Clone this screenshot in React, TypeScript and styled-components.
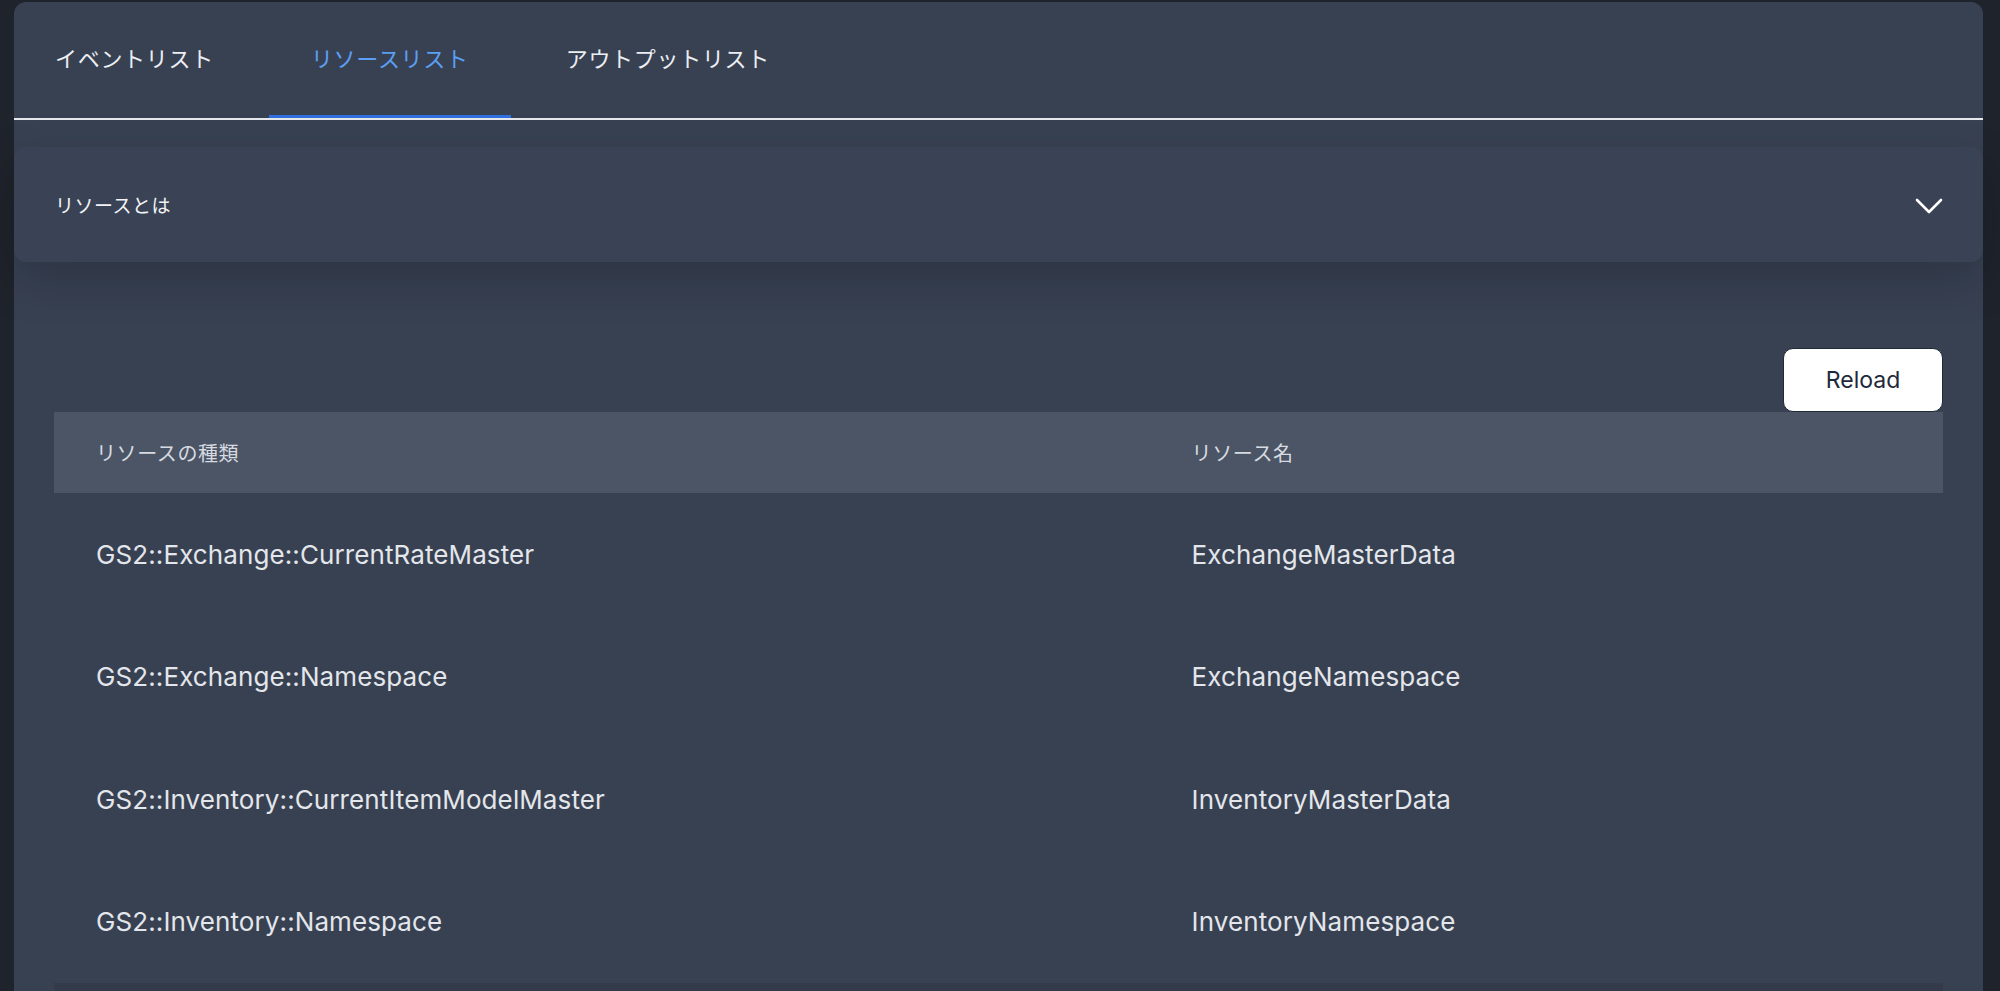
import React, { useState } from "react";
import styled, { createGlobalStyle } from "styled-components";

const GlobalStyle = createGlobalStyle`
  html, body {
    margin: 0;
    padding: 0;
    background: #1f232b;
    height: 991px;
    overflow: hidden;
  }
  body {
    padding: 2px 17px 0 14px;
    box-sizing: border-box;
    font-family: "Noto Sans CJK JP", "Noto Sans", sans-serif;
  }
  * { box-sizing: border-box; }
`;

const Card = styled.div`
  background: #384152;
  border-radius: 12px 12px 0 0;
  min-height: 1200px;
  display: flex;
  flex-direction: column;
`;

const TabBar = styled.div`
  display: flex;
  gap: 13px;
  height: 118px;
  border-bottom: 2px solid #e5e7eb;
`;

const Tab = styled.button<{ $active?: boolean }>`
  appearance: none;
  background: transparent;
  border: none;
  margin: 0;
  padding: 0 42px 7px;
  height: 116px;
  display: flex;
  align-items: center;
  font-family: "Noto Sans CJK JP", sans-serif;
  font-size: 22px;
  letter-spacing: 0.7px;
  color: ${(p) => (p.$active ? "#5b9ef2" : "#eceef2")};
  box-shadow: ${(p) => (p.$active ? "inset 0 -3px 0 #2f6fe0" : "none")};
  cursor: pointer;
  &:first-child { padding-left: 41px; }
`;

const Accordion = styled.div`
  margin-top: 27px;
  height: 115px;
  background: #3a4355;
  border-radius: 12px;
  box-shadow: 0 18px 45px rgba(10, 14, 22, 0.22);
  display: flex;
  align-items: center;
  justify-content: space-between;
  padding: 0 40px 0 41px;
`;

const AccordionTitle = styled.span`
  font-family: "Noto Sans CJK JP", sans-serif;
  font-size: 19px;
  letter-spacing: 0.5px;
  color: #f1f3f6;
`;

const Chevron = styled.svg`
  width: 28px;
  height: 16px;
  margin-top: 3px;
`;

const Section = styled.div`
  padding: 86px 40px 0 40px;
  display: flex;
  flex-direction: column;
`;

const Toolbar = styled.div`
  display: flex;
  justify-content: flex-end;
`;

const ReloadButton = styled.button`
  width: 160px;
  height: 64px;
  background: #ffffff;
  border: 1px solid #1f2937;
  border-radius: 10px;
  font-family: Inter, "Noto Sans", sans-serif;
  font-size: 23px;
  color: #1e293b;
  cursor: pointer;
`;

const Table = styled.div`
  display: flex;
  flex-direction: column;
`;

const Row = styled.div<{ $head?: boolean }>`
  display: grid;
  grid-template-columns: 58% 42%;
  align-items: center;
  height: ${(p) => (p.$head ? "81px" : "122.5px")};
  background: ${(p) => (p.$head ? "#4b5565" : "transparent")};
`;

const HeadCell = styled.div`
  padding-left: 42px;
  font-family: "Noto Sans CJK JP", sans-serif;
  font-size: 20px;
  letter-spacing: 0.6px;
  color: #d7dbe1;
`;

const Cell = styled.div`
  padding-left: 42px;
  font-family: Inter, "Noto Sans", sans-serif;
  font-size: 26px;
  letter-spacing: 0.1px;
  font-feature-settings: "calt" 0;
  color: #e3e6eb;
`;

const Footer = styled.div`
  height: 120px;
  background: #333b4a;
`;

const rows = [
  ["GS2::Exchange::CurrentRateMaster", "ExchangeMasterData"],
  ["GS2::Exchange::Namespace", "ExchangeNamespace"],
  ["GS2::Inventory::CurrentItemModelMaster", "InventoryMasterData"],
  ["GS2::Inventory::Namespace", "InventoryNamespace"],
];

const tabs = ["イベントリスト", "リソースリスト", "アウトプットリスト"];

export default function App() {
  const [active, setActive] = useState(1);
  return (
    <>
      <GlobalStyle />
      <Card>
        <TabBar>
          {tabs.map((t, i) => (
            <Tab key={t} $active={i === active} onClick={() => setActive(i)}>
              {t}
            </Tab>
          ))}
        </TabBar>
        <Accordion>
          <AccordionTitle>リソースとは</AccordionTitle>
          <Chevron viewBox="0 0 28 16" fill="none">
            <path
              d="M2 2 L14 14 L26 2"
              stroke="#ffffff"
              strokeWidth="2.6"
              strokeLinecap="round"
              strokeLinejoin="round"
            />
          </Chevron>
        </Accordion>
        <Section>
          <Toolbar>
            <ReloadButton>Reload</ReloadButton>
          </Toolbar>
          <Table>
            <Row $head>
              <HeadCell>リソースの種類</HeadCell>
              <HeadCell>リソース名</HeadCell>
            </Row>
            {rows.map(([type, name]) => (
              <Row key={type}>
                <Cell>{type}</Cell>
                <Cell>{name}</Cell>
              </Row>
            ))}
            <Footer />
          </Table>
        </Section>
      </Card>
    </>
  );
}
